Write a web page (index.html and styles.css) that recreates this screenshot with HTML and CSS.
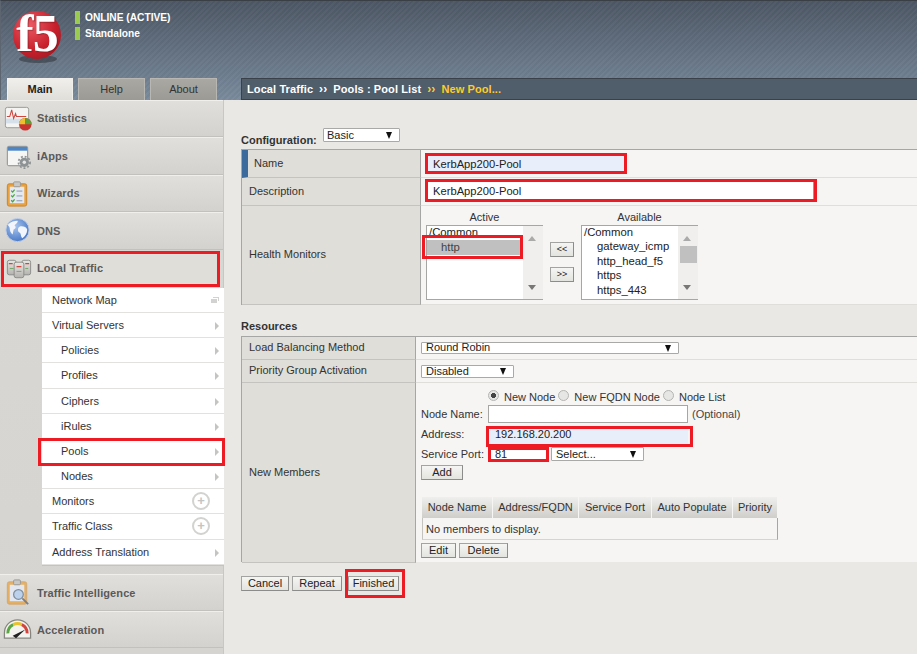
FILE: index.html
```html
<!DOCTYPE html>
<html lang="en">
<head>
<meta charset="utf-8">
<title>New Pool</title>
<link rel="stylesheet" href="styles.css">
</head>
<body>
<header class="top">
  <div class="brand">
    <div class="logo">
      <span class="logo-shadow"></span>
      <span class="logo-ball"><span class="logo-text">f5</span></span>
    </div>
    <div class="status">
      <div class="status-row"><i></i><span class="st1">ONLINE (ACTIVE)</span></div>
      <div class="status-row"><i></i><span>Standalone</span></div>
    </div>
  </div>
  <div class="topbar">
    <nav class="tabs">
      <span class="tab on">Main</span>
      <span class="tab">Help</span>
      <span class="tab">About</span>
    </nav>
    <div class="crumb">
      <span>Local Traffic</span><span class="sep">››</span><span>Pools : Pool List</span><span class="sep y">››</span><span class="y">New Pool...</span>
    </div>
  </div>
</header>
<div class="body">
  <aside class="side">
    <div class="navitem first">
      <svg class="ico" viewBox="0 0 32 32" width="32" height="32"><rect x="3.500" y="4.500" width="24" height="21" rx="2" fill="#f4f4f2" stroke="#9a9a98"/><rect x="4" y="16" width="23" height="5" fill="#d5e0ea"/><path d="M5 14h3l2-7 2 9 2-5 1 3h10" fill="none" stroke="#d2443c" stroke-width="1.100"/><circle cx="24" cy="22" r="6.500" fill="#c9332f"/><path d="M24 22V15.500A6.500 6.500 0 0 0 17.500 22z" fill="#e8c32e"/><path d="M24 22V15.500A6.500 6.500 0 0 1 30.500 22z" fill="#5f9e36"/></svg>
      <span>Statistics</span>
    </div>
    <div class="navitem">
      <svg class="ico" viewBox="0 0 32 32" width="32" height="32"><rect x="5.500" y="5.500" width="21" height="20" rx="1.500" fill="#f6f6f4" stroke="#8a8a88"/><rect x="6" y="6" width="20" height="4" fill="#4d86c6"/><circle cx="23" cy="22" r="4.800" fill="#8d9294"/><circle cx="23" cy="22" r="6" fill="none" stroke="#8d9294" stroke-width="1.800" stroke-dasharray="2 2"/><circle cx="23" cy="22" r="1.800" fill="#e5e5e3"/></svg>
      <span>iApps</span>
    </div>
    <div class="navitem">
      <svg class="ico" viewBox="0 0 32 32" width="32" height="32"><rect x="5.500" y="6" width="20" height="23" rx="2" fill="#e9a23f" stroke="#c98429"/><rect x="8" y="9" width="15" height="17" fill="#e4e8f0"/><rect x="12" y="4" width="7" height="5" rx="1" fill="#c8c8c6" stroke="#999"/><path d="M9.500 13l1.500 1.500 2-2.500M9.500 18l1.500 1.500 2-2.500M9.500 23l1.500 1.500 2-2.500" fill="none" stroke="#4aa33c" stroke-width="1.300"/><path d="M15 13.500h6M15 18.500h6M15 23.500h6" stroke="#8797ad"/></svg>
      <span>Wizards</span>
    </div>
    <div class="navitem">
      <svg class="ico" viewBox="0 0 32 32" width="32" height="32"><defs><radialGradient id="g" cx=".4" cy=".35" r=".75"><stop offset="0" stop-color="#a8c6ee"/><stop offset="1" stop-color="#3d6fc2"/></radialGradient></defs><circle cx="16" cy="15.500" r="12" fill="url(#g)" stroke="#c3cfe2"/><path d="M6 10c3-3 7-4 10-4 1 2-2 3-3 5 2 1 1 3-1 4l-1 5c-2-1-3-4-3-6s-1-2-2-4zM18 12c3-1 7 0 8 3 0 4-2 7-5 9-2-2-1-5-3-6s-2-5 0-6z" fill="#f2f5fb"/></svg>
      <span>DNS</span>
    </div>
    <div class="navitem lt">
      <svg class="ico" viewBox="0 0 32 32" width="32" height="32"><defs><linearGradient id="s" x1="0" y1="0" x2="0" y2="1"><stop offset="0" stop-color="#e8e7e4"/><stop offset="1" stop-color="#b4b3b0"/></linearGradient></defs><g fill="url(#s)" stroke="#8c8c8a"><rect x="4.500" y="7.500" width="9" height="15" rx="2"/><rect x="19.500" y="7.500" width="9" height="15" rx="2"/><rect x="11.500" y="9.500" width="10" height="16" rx="2"/></g><path d="M6 11h4M23 11h4M14 14h5" stroke="#d2443c" stroke-width="1.200"/><path d="M7 16h4M23 16h3M14 19h5" stroke="#74a76a"/></svg>
      <span>Local Traffic</span>
    </div>
    <div class="submenu">
      <a class="sub">Network Map<svg class="wins" viewBox="0 0 8 6" width="8" height="6"><path d="M2 0h6v4H7V1H2zM0 2h6v4H0z" fill="#d2d2d0"/></svg></a>
      <a class="sub arrow">Virtual Servers</a>
      <a class="sub in arrow">Policies</a>
      <a class="sub in arrow">Profiles</a>
      <a class="sub in arrow">Ciphers</a>
      <a class="sub in arrow">iRules</a>
      <a class="sub in arrow pools">Pools</a>
      <a class="sub in arrow">Nodes</a>
      <a class="sub">Monitors<span class="plus">+</span></a>
      <a class="sub">Traffic Class<span class="plus">+</span></a>
      <a class="sub arrow">Address Translation</a>
    </div>
    <div class="navitem gap">
      <svg class="ico" viewBox="0 0 32 32" width="32" height="32"><rect x="5.500" y="5" width="20" height="23" rx="2" fill="#e9a23f" opacity=".75" stroke="#d09a55"/><rect x="8" y="8" width="15" height="17" fill="#e2e7f0"/><rect x="12" y="3" width="7" height="5" rx="1" fill="#c8c8c6" stroke="#999"/><circle cx="17" cy="18" r="5" fill="#bcd2ec" stroke="#7e8f9f" stroke-width="1.300"/><path d="M21 22l6 6" stroke="#7b7f83" stroke-width="2"/></svg>
      <span>Traffic Intelligence</span>
    </div>
    <div class="navitem">
      <svg class="ico" viewBox="0 0 32 32" width="32" height="32"><path d="M2.500 25V19.500a13.500 13.500 0 0 1 27 0V25z" fill="#f4f3f0" stroke="#86867e" stroke-width="1.300"/><path d="M6 20a10 10 0 0 1 5.500-9" fill="none" stroke="#5aa642" stroke-width="3"/><path d="M11.500 11a10 10 0 0 1 9 0" fill="none" stroke="#e8c32e" stroke-width="3"/><path d="M20.500 11a10 10 0 0 1 5.500 9" fill="none" stroke="#d2443c" stroke-width="3"/><path d="M11 22.500l13-6.500-9.500 9z" fill="#222"/></svg>
      <span>Acceleration</span>
    </div>
  </aside>

  <main class="main">
    <div class="config">
      <span class="config-label">Configuration:</span>
      <span class="sel config-sel">Basic</span>
    </div>

    <section class="panel general">
      <div class="lab name-lab">Name</div>
      <div class="val"><div class="mark name-mark"><span class="fill">KerbApp200-Pool</span></div></div>
      <div class="lab">Description</div>
      <div class="val"><div class="mark desc-mark"><span class="plain">KerbApp200-Pool</span></div></div>
      <div class="lab">Health Monitors</div>
      <div class="val monitors">
        <div class="mon-col active-col">
          <div class="mon-title">Active</div>
          <div class="listbox">
            <div class="opts">
              <div class="opt">/Common</div>
              <div class="opt sub-opt picked">http</div>
            </div>
            <div class="sbar"><i class="up"></i><i class="dn"></i></div>
            <span class="http-mark"></span>
          </div>
        </div>
        <div class="movers"><span class="btn mv">&lt;&lt;</span><span class="btn mv">&gt;&gt;</span></div>
        <div class="mon-col avail-col">
          <div class="mon-title">Available</div>
          <div class="listbox">
            <div class="opts">
              <div class="opt">/Common</div>
              <div class="opt sub-opt">gateway_icmp</div>
              <div class="opt sub-opt">http_head_f5</div>
              <div class="opt sub-opt">https</div>
              <div class="opt sub-opt">https_443</div>
            </div>
            <div class="sbar"><i class="up"></i><b></b><i class="dn"></i></div>
          </div>
        </div>
      </div>
    </section>

    <h2 class="res-title">Resources</h2>
    <section class="panel resources">
      <div class="lab">Load Balancing Method</div>
      <div class="val sel-row"><span class="sel lb-sel">Round Robin</span></div>
      <div class="lab">Priority Group Activation</div>
      <div class="val sel-row"><span class="sel pg-sel">Disabled</span></div>
      <div class="lab">New Members</div>
      <div class="val members">
        <div class="radios">
          <span class="radio on"></span><span>New Node</span>
          <span class="radio"></span><span>New FQDN Node</span>
          <span class="radio"></span><span>Node List</span>
        </div>
        <div class="frow node-row"><span class="flabel">Node Name:</span><span class="input node-in"></span><span class="opt-note">(Optional)</span></div>
        <div class="frow addr-row"><span class="flabel">Address:</span><div class="mark addr-mark"><span class="fill">192.168.20.200</span></div></div>
        <div class="frow port-row"><span class="flabel">Service Port:</span><div class="mark port-mark"><span>81</span></div><span class="sel port-sel">Select...</span></div>
        <span class="btn add">Add</span>
        <div class="mtable">
          <div class="mhead">
            <span class="c1">Node Name</span><span class="c2">Address/FQDN</span><span class="c3">Service Port</span><span class="c4">Auto Populate</span><span class="c5">Priority</span>
          </div>
          <div class="mrow">No members to display.</div>
        </div>
        <div class="mbtns"><span class="btn edit">Edit</span><span class="btn del">Delete</span></div>
      </div>
    </section>

    <div class="actions">
      <span class="btn cancel">Cancel</span>
      <span class="btn repeat">Repeat</span>
      <span class="finish-mark"><span class="btn finished">Finished</span></span>
    </div>
  </main>
</div>
</body>
</html>
```
FILE: styles.css
```css
* { box-sizing: border-box; }
html, body { margin: 0; height: 654px; overflow: hidden; }
body { font: 11px "Liberation Sans", Arial, sans-serif; color: #222; background: #e9e8e4; }

.top {
  height: 100px;
  border-top: 1px solid #3a3f46;
  border-left: 1px solid #5d6670;
  background:
    repeating-linear-gradient(135deg, rgba(255,255,255,.025) 0 2px, rgba(0,0,0,.025) 2px 4px),
    linear-gradient(#4d5765, #7a8b9d);
  display: flex;
  flex-direction: column;
  justify-content: space-between;
}
.brand { display: flex; padding: 10px 0 0 12px; }
.logo { position: relative; width: 50px; height: 50px; }
.logo-ball {
  position: absolute; left: 0; top: 0;
  width: 48px; height: 48px; border-radius: 50%;
  background: radial-gradient(circle at 35% 30%, #ea5a63, #c8202c 55%, #8e1820 100%);
  display: flex; align-items: center; justify-content: center;
}
.logo-text {
  font: bold 52px/46px "Liberation Serif", serif;
  letter-spacing: -1px;
  color: #fff;
  margin: -3px 0 0 0;
  text-shadow: 1px 1px 1px rgba(110,20,25,.5);
}
.logo-shadow {
  position: absolute; left: 6px; top: 44px;
  width: 38px; height: 8px; border-radius: 50%;
  background: rgba(40,44,50,.5);
}
.status { margin-left: 12px; display: flex; flex-direction: column; gap: 3px; }
.status-row { display: flex; align-items: center; height: 13px; font-size: 10.200px; font-weight: bold; color: #fff; }
.status-row i { width: 5px; height: 13px; background: #9ccb51; margin-right: 5px; }
.st1 { margin-top: -1px; }

.topbar { display: flex; align-items: flex-end; }
.tabs { display: flex; margin-left: 6px; width: 234px; gap: 5px; }
.tab {
  width: 67px; height: 22px; line-height: 21px; text-align: center;
  font-size: 11px; color: #333;
  border: 1px solid #b8b7b2; border-bottom: 0;
  background: linear-gradient(#a9a8a3, #9b9a95);
}
.tabs .tab:nth-child(1) { width: 66px; }
.tab.on { background: linear-gradient(#f0efeb, #dfded9); border-color: #f1f0ec; font-weight: bold; color: #222; }
.crumb {
  flex: 1; height: 22px; padding-left: 5px;
  display: flex; align-items: center;
  font-weight: bold; color: #fff;
  letter-spacing: .1px;
  background: #505d6b;
  border-top: 1px solid #3a4149;
  border-left: 1px solid #3a4149;
  border-bottom: 1px solid #3a4149;
}
.crumb .sep { margin: 0 6px; font-size: 12px; }
.crumb .y { color: #ffcc29; }

.body { display: flex; height: 554px; }
.side { width: 224px; flex: none; background: linear-gradient(#d9d8d4, #d5d4d0); border-right: 1px solid #c8c7c3; }
.navitem {
  height: 37.400px;
  display: flex; align-items: center;
  font-size: 11px; font-weight: bold; color: #5a5a5a;
  background: linear-gradient(#e0dfdb, #d3d2ce);
  border-top: 1px solid #f0efec;
  border-bottom: 1px solid #c2c1bd;
  letter-spacing: .1px;
}
.first { padding-bottom: 1px; }
.ico { flex: none; margin: 0 4px 0 2px; width: 31px; height: 31px; }
.lt {
  width: 219px; height: 36px;
  margin: 1px 0 1px 1px;
  border: 3px solid #ed1c24;
  background: #dfded9;
  padding-bottom: 1px;
}
.lt .ico { margin: 0 3px 0 -1px; }
.submenu {
  margin: 0 -1px 0 42px;
  height: 277px;
  background: #fff;
  display: grid;
  grid-template-rows: 25px 25px 25px 26px 25px 25px 25px 25px 25px 26px 25px;
  box-shadow: 0 1px 0 #c4c3bf;
  position: relative;
}
.sub {
  position: relative;
  display: flex; align-items: center;
  padding-left: 10px;
  color: #333;
  border-bottom: 1px solid #e2e1de;
}
.sub.in { padding-left: 19px; }
.sub.arrow::after {
  content: ""; position: absolute; right: 5px; top: 9px;
  border-left: 4px solid #c4c4c2;
  border-top: 4px solid transparent; border-bottom: 4px solid transparent;
}
.wins { position: absolute; right: 5px; top: 9px; }
.plus {
  position: absolute; right: 14px; top: 3px;
  width: 18px; height: 18px; border-radius: 50%;
  border: 2px solid #d2d2d0; color: #c4c4c2;
  font: bold 13px/13px "Liberation Sans", sans-serif; text-align: center;
}
.pools::before {
  content: ""; position: absolute; left: -4px; right: -1px; top: -1px; bottom: -3px;
  border: 3px solid #ed1c24;
}
.gap { margin-top: 9px; padding-top: 1px; }

.main { flex: 1; padding: 28px 0 0 17px; min-width: 0; }
.config { display: flex; height: 21px; align-items: flex-start; }
.config-label { font-weight: bold; color: #333; margin-top: 6px; width: 82px; font-size: 11px; }
.sel {
  position: relative; display: block;
  height: 14px; line-height: 12px; padding-left: 4px;
  background: #fff; border: 1px solid #a9a9a7; border-radius: 1px;
  color: #222; font-size: 11px;
}
.sel::after {
  content: ""; position: absolute; right: 7px; top: 3px;
  border-top: 7px solid #111;
  border-left: 3.500px solid transparent; border-right: 3.500px solid transparent;
}
.config-sel { width: 77px; padding-left: 3px; }

.panel {
  display: grid;
  border-top: 1px solid #a6a6a4;
  border-left: 1px solid #a6a6a4;
  background: #f6f5f3;
}
.general { grid-template-columns: 179px 1fr; grid-template-rows: 28px 28px 99px; height: 156px; }
.lab {
  display: flex; align-items: center;
  padding: 0 0 2px 7px;
  background: #dfded9;
  border-right: 1px solid #a6a6a4;
  border-bottom: 1px solid #c4c3bf;
  color: #333;
}
.name-lab { border-left: 6px solid #3c6a9c; padding-left: 6px; }
.val { border-bottom: 1px solid #dfdedb; position: relative; min-width: 0; }
.mark { border: 3px solid #ed1c24; display: flex; align-items: center; }
.fill { background: #e8eefa; flex: 1; align-self: stretch; display: flex; align-items: center; }
.name-mark { width: 202px; height: 21px; margin: 3px 0 0 4px; font-size: 11.200px; }
.name-mark .fill { padding-left: 5px; }
.desc-mark { width: 392px; height: 23px; margin: 1px 0 0 4px; font-size: 11.200px; }
.plain { flex: 1; align-self: stretch; background: #fff; border-right: 1px solid #9a9a98; padding-left: 5px; display: flex; align-items: center; }

.monitors { display: flex; padding-left: 5px; }
.mon-col { width: 117px; }
.mon-title { height: 19px; line-height: 23px; text-align: center; color: #333; }
.listbox {
  position: relative; display: flex;
  height: 75px;
  background: #fff;
  border: 1px solid #a6a6a4; border-right: 0;
}
.opts { flex: 1; overflow: hidden; line-height: 14.400px; margin-top: -1px; }
.opt { padding-left: 2px; white-space: nowrap; font-size: 11.300px; }
.sub-opt { padding-left: 15px; }
.picked { background: #c0c0c0; color: #444; height: 15px; padding-left: 14px; margin-top: 1px; }
.sbar { position: relative; width: 20px; background: #f0efed; flex: none; }
.sbar b { position: absolute; left: 2px; top: 20px; width: 17px; height: 17px; background: #c0c0c0; }
.sbar i { position: absolute; left: 5px; border-left: 4.500px solid transparent; border-right: 4.500px solid transparent; }
.sbar .up { top: 10px; border-bottom: 5px solid #aaa; }
.sbar .dn { bottom: 9px; border-top: 5px solid #777; }
.http-mark {
  position: absolute; left: -5px; top: 9px; width: 101px; height: 24px;
  border: 3px solid #ed1c24;
}
.movers { width: 38px; padding: 36px 0 0 7px; display: flex; flex-direction: column; gap: 10px; }
.btn {
  display: block; text-align: center;
  height: 15px; line-height: 13px;
  border: 1px solid #a3a3a1;
  border-right-color: #8c8c8a; border-bottom-color: #8c8c8a;
  background: linear-gradient(#f5f5f3, #e3e3e0);
  color: #222; font-size: 11px;
}
.mv { width: 24px; font-size: 9px; }

.res-title { margin: 15px 0 0; height: 16px; font-size: 11px; font-weight: bold; color: #333; line-height: 12px; }
.resources { grid-template-columns: 174px 1fr; grid-template-rows: 23px 23px 180px; height: 226px; }
.sel-row { padding: 5px 0 0 5px; }
.lb-sel { width: 258px; height: 12px; line-height: 9px; }
.lb-sel::after, .pg-sel::after { top: 2px; }
.pg-sel { width: 93px; height: 13px; line-height: 10px; }
.members { padding-left: 5px; border-bottom: 0; }
.radios { display: flex; align-items: center; height: 21px; padding: 7px 0 0 67px; color: #333; }
.radio { width: 11px; height: 11px; border-radius: 50%; border: 1px solid #b4b4b2; background: #e6e6e4; margin: -3px 5px 0 3px; flex: none; }
.radio:first-child { margin-left: 0; }
.radio.on { background: radial-gradient(circle, #444 0 2.400px, #e6e6e4 2.800px); }
.frow { display: flex; align-items: center; }
.flabel { width: 67px; flex: none; color: #333; }
.node-row { height: 19px; }
.input { display: block; background: #fff; border: 1px solid #a6a6a4; }
.node-in { width: 200px; height: 18px; }
.opt-note { margin-left: 4px; color: #444; }
.addr-row { height: 22px; margin-top: 2px; }
.addr-row .flabel { width: 65px; margin-top: -5px; }
.addr-mark { width: 207px; height: 21px; }
.addr-mark .fill { padding: 0 0 4px 6px; margin-right: 2px; }
.port-row { height: 15px; }
.port-row .flabel { margin-top: -2px; }
.port-mark { width: 61px; height: 15px; background: #fff; padding: 0 0 1px 4px; line-height: 9px; }
.port-sel { width: 93px; margin: -2px 0 0 2px; }
.add { width: 42px; margin-top: 3px; }
.mtable { width: 356px; margin: 17px 0 0 1px; background: #f6f5f3; }
.mhead { display: flex; height: 21px; }
.mhead span {
  display: flex; align-items: center; justify-content: center;
  padding-bottom: 2px;
  background: linear-gradient(#efefed, #cfcecb);
  border-right: 1px solid #f6f5f3;
  color: #333;
}
.c1 { width: 71px; } .c2 { width: 86px; } .c3 { width: 73px; } .c4 { width: 81px; } .c5 { width: 45px; }
.mrow {
  height: 22px; line-height: 22px; padding-left: 3px; color: #333;
  border-left: 1px solid #c4c3bf; border-right: 1px solid #a6a6a4; border-bottom: 1px solid #d5d4d1;
}
.mbtns { display: flex; gap: 3px; margin-top: 3px; }
.edit { width: 35px; }
.del { width: 49px; }

.actions { display: flex; align-items: center; gap: 3px; margin-top: 7px; height: 29px; }
.cancel { width: 48px; }
.repeat { width: 50px; }
.finish-mark { border: 3px solid #ed1c24; padding: 4px 0 0 0; width: 60px; height: 29px; }
.finished { width: 51px; }
```
